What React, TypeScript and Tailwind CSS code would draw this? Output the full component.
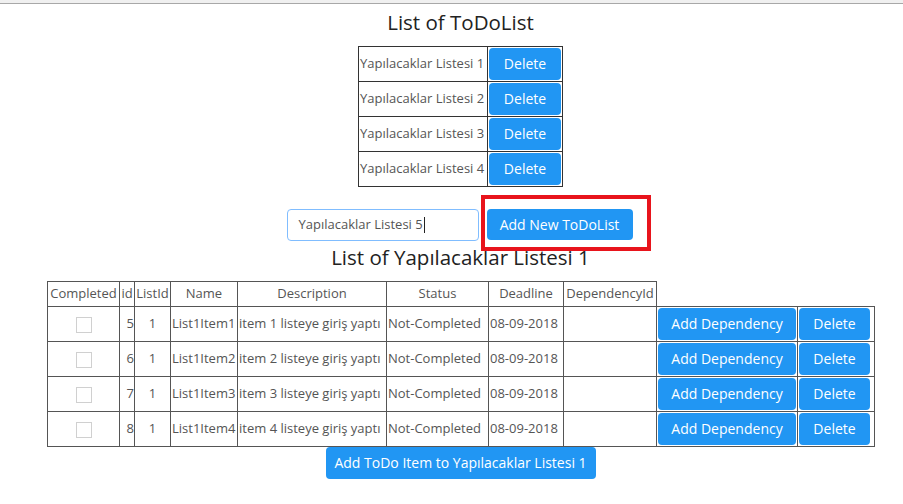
const lists = ["Yapılacaklar Listesi 1", "Yapılacaklar Listesi 2", "Yapılacaklar Listesi 3", "Yapılacaklar Listesi 4"];

const items = [
  { id: 5, listId: 1, name: "List1Item1", desc: "item 1 listeye giriş yaptı" },
  { id: 6, listId: 1, name: "List1Item2", desc: "item 2 listeye giriş yaptı" },
  { id: 7, listId: 1, name: "List1Item3", desc: "item 3 listeye giriş yaptı" },
  { id: 8, listId: 1, name: "List1Item4", desc: "item 4 listeye giriş yaptı" },
];

const btn = "rounded-[4px] bg-[#2196f3] text-white text-[14px] leading-none";

export default function App() {
  return (
    <div className="relative min-h-[504px] w-[903px] bg-white font-['Open_Sans',sans-serif] text-[#555]">
      <div className="h-[4px] bg-[#f0f0f0] border-b border-[#a8a8a8]" />

      <h2 className="mt-[4px] pl-[18px] text-center text-[20.5px] leading-[28px] text-[#222]">List of ToDoList</h2>

      <div className="mt-[10px] flex justify-center pl-[18px]">
        <table className="border-collapse border border-[#333]">
          <tbody>
            {lists.map((l) => (
              <tr key={l} className="border-b border-[#333] h-[35px]">
                <td className="w-[129px] border-r border-[#333] px-[1px] text-[13px] whitespace-nowrap">{l}</td>
                <td className="w-[75px] p-[1px]">
                  <button className={`${btn} h-[32px] w-[72px]`}>Delete</button>
                </td>
              </tr>
            ))}
          </tbody>
        </table>
      </div>

      <div className="mt-[22px] flex justify-center gap-[8px] pl-[16px]">
        <div className="flex h-[32px] w-[192px] items-center rounded-[4px] border border-[#80bdff] px-[11px] text-[13px] text-[#555]">
          Yapılacaklar Listesi 5<span className="ml-[1px] inline-block h-[16px] w-[1px] bg-[#222]" />
        </div>
        <button className={`${btn} h-[31px] w-[146px]`}>Add New ToDoList</button>
      </div>

      <h2 className="mt-[2px] pl-[18px] text-center text-[20.5px] leading-[28px] text-[#222]">List of Yapılacaklar Listesi 1</h2>

      <div className="mt-[10px] pl-[47px]">
        <table className="border-collapse text-[13px]">
          <thead>
            <tr className="h-[25px] text-center">
              <th className="w-[72px] border border-[#555] font-normal">Completed</th>
              <th className="w-[15px] border border-[#555] font-normal">id</th>
              <th className="w-[36px] border border-[#555] font-normal">ListId</th>
              <th className="w-[67px] border border-[#555] font-normal">Name</th>
              <th className="w-[149px] border border-[#555] font-normal">Description</th>
              <th className="w-[102px] border border-[#555] font-normal">Status</th>
              <th className="w-[75px] border border-[#555] font-normal">Deadline</th>
              <th className="w-[93px] border border-[#555] font-normal whitespace-nowrap">DependencyId</th>
            </tr>
          </thead>
          <tbody>
            {items.map((it) => (
              <tr key={it.id} className="h-[35px] whitespace-nowrap">
                <td className="border border-[#555] text-center">
                  <span className="inline-block h-[16px] w-[16px] border border-[#d0d0d0] align-middle" />
                </td>
                <td className="border border-[#555] text-right">{it.id}</td>
                <td className="border border-[#555] text-center">{it.listId}</td>
                <td className="border border-[#555] px-[1px]">{it.name}</td>
                <td className="border border-[#555] px-[1px]">{it.desc}</td>
                <td className="border border-[#555] px-[1px]">Not-Completed</td>
                <td className="border border-[#555] px-[1px]">08-09-2018</td>
                <td className="border border-[#555]" />
                <td className="w-[141px] border-y border-l border-[#555] p-[1px]">
                  <button className={`${btn} h-[32px] w-[138px]`}>Add Dependency</button>
                </td>
                <td className="w-[77px] border border-[#555] p-[1px]">
                  <button className={`${btn} h-[32px] w-[71px]`}>Delete</button>
                </td>
              </tr>
            ))}
          </tbody>
        </table>
      </div>

      <div className="flex justify-center pl-[18px]">
        <button className={`${btn} h-[32px] w-[270px]`}>Add ToDo Item to Yapılacaklar Listesi 1</button>
      </div>

      <div className="absolute left-[481px] top-[195px] h-[56px] w-[170px] border-[4px] border-[#e8141c]" />
    </div>
  );
}
